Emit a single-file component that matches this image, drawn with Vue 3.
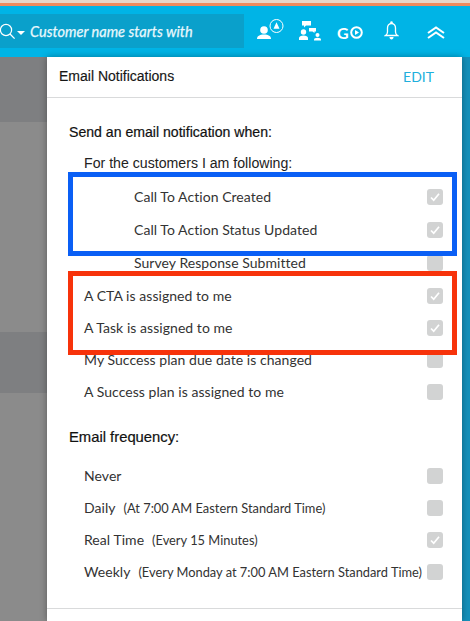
<script setup>
const notifyRows = [
  { label: 'Call To Action Created', checked: true, indent: true },
  { label: 'Call To Action Status Updated', checked: true, indent: true },
  { label: 'Survey Response Submitted', checked: false, indent: true },
  { label: 'A CTA is assigned to me', checked: true },
  { label: 'A Task is assigned to me', checked: true },
  { label: 'My Success plan due date is changed', checked: false },
  { label: 'A Success plan is assigned to me', checked: false }
]
const frequencyRows = [
  { label: 'Never', detail: '', checked: false },
  { label: 'Daily', detail: '(At 7:00 AM Eastern Standard Time)', checked: false },
  { label: 'Real Time', detail: '(Every 15 Minutes)', checked: true },
  { label: 'Weekly', detail: '(Every Monday at 7:00 AM Eastern Standard Time)', checked: false }
]
</script>

<template>
  <div class="screen">
    <div class="strip-light"></div>
    <div class="strip-orange"></div>
    <header class="topbar">
      <div class="search">
        <svg class="search-icon" width="18" height="18" viewBox="0 0 18 18">
          <circle cx="6" cy="7" r="5.6" fill="none" stroke="#fff" stroke-width="1.2" />
          <path d="M10 11l4.6 4.6" stroke="#fff" stroke-width="1.3" fill="none" />
        </svg>
        <svg class="caret" width="8" height="4" viewBox="0 0 8 4"><path d="M0 0h8L4 4z" fill="#fff" /></svg>
        <span class="placeholder">Customer name starts with</span>
      </div>
      <svg class="ic-person" width="28" height="22" viewBox="0 0 28 22">
        <circle cx="7" cy="11" r="3.8" fill="#fff" />
        <path d="M0 20c0-3 2.500-4.600 7-4.600s7 1.600 7 4.600z" fill="#fff" />
        <circle cx="19.500" cy="7" r="6.500" fill="none" stroke="#fff" stroke-width="1" />
        <path d="M19.500 3.200l3 6.500h-6z" fill="#fff" />
      </svg>
      <svg class="ic-org" width="23" height="20" viewBox="0 0 23 20">
        <path d="M3 0h9v4.600H7L5 6.500V4.600H3z" fill="#fff" />
        <path d="M10 7h7v3.500h-1.500V12L13.500 10.500H10z" fill="#fff" />
        <circle cx="4.500" cy="11" r="2.700" fill="#fff" />
        <path d="M0 19v-2c0-1.500 2-2.600 4.500-2.600S9 15.500 9 17v2z" fill="#fff" />
        <circle cx="18.500" cy="14" r="2" fill="#fff" />
        <path d="M15 19.500v-1c0-1 1.500-1.700 3.500-1.700s3.500.7 3.500 1.700v1z" fill="#fff" />
      </svg>
      <div class="go">
        <span class="go-g">G</span>
        <svg width="13" height="13" viewBox="0 0 13 13">
          <circle cx="6.500" cy="6.500" r="5.300" fill="none" stroke="#fff" stroke-width="2" />
          <path d="M5 4l4 2.500L5 9z" fill="#fff" />
        </svg>
      </div>
      <svg class="ic-bell" width="15" height="19" viewBox="0 0 15 19">
        <path d="M7.500 2.500c-2.800 0-4 2-4 4.500v4c0 1.600-.8 2.700-2 3.500h12c-1.200-.8-2-1.900-2-3.500V7c0-2.500-1.200-4.500-4-4.500z" fill="none" stroke="#fff" stroke-width="1.300" />
        <circle cx="7.500" cy="1.500" r="1.300" fill="#fff" />
        <path d="M5.500 16h4c0 1.500-.8 2.400-2 2.400s-2-.9-2-2.400z" fill="#fff" />
      </svg>
      <svg class="ic-chevrons" width="18" height="13" viewBox="0 0 18 13">
        <path d="M1 7l8-5.500L17 7M1 12l8-5.500L17 12" fill="none" stroke="#fff" stroke-width="2.100" />
      </svg>
    </header>

    <div class="content">
      <div class="backdrop">
        <div class="band dark band-a"></div>
        <div class="band light band-b"></div>
        <div class="band dark band-c"></div>
        <div class="band light band-d"></div>
      </div>

      <section class="panel">
        <div class="panel-head">
          <span class="panel-title">Email Notifications</span>
          <span class="edit">EDIT</span>
        </div>
        <div class="panel-body">
          <h3 class="heading first">Send an email notification when:</h3>
          <p class="subheading">For the customers I am following:</p>
          <div class="rows">
            <div v-for="row in notifyRows" :key="row.label" class="row" :class="{ indent: row.indent }">
              <span class="label">{{ row.label }}</span>
              <span class="box">
                <svg v-if="row.checked" width="16" height="16" viewBox="0 0 16 16">
                  <path d="M4 8.500l2.700 2.700L12 4.800" fill="none" stroke="#fff" stroke-width="1.700" />
                </svg>
              </span>
            </div>
          </div>
          <h3 class="heading second">Email frequency:</h3>
          <div class="rows freq">
            <div v-for="row in frequencyRows" :key="row.label" class="row">
              <span class="label">{{ row.label }}<span v-if="row.detail" class="detail">{{ row.detail }}</span></span>
              <span class="box">
                <svg v-if="row.checked" width="16" height="16" viewBox="0 0 16 16">
                  <path d="M4 8.500l2.700 2.700L12 4.800" fill="none" stroke="#fff" stroke-width="1.700" />
                </svg>
              </span>
            </div>
          </div>
        </div>
        <div class="panel-foot"></div>
      </section>

      <div class="side"></div>
    </div>

    <div class="mark mark-blue"></div>
    <div class="mark mark-red"></div>
  </div>
</template>

<style scoped>
.screen {
  position: relative;
  width: 470px;
  height: 621px;
  overflow: hidden;
  display: flex;
  flex-direction: column;
  background: #fff;
  font-family: "Lato", "Liberation Sans", sans-serif;
}
.strip-light { height: 3px; background: #e6d6c8; }
.strip-orange { height: 3px; background: #ef8b5c; }
.topbar {
  height: 51px;
  flex: none;
  display: flex;
  align-items: center;
  background: #00b4e6;
  position: relative;
  color: #fff;
}
.search {
  width: 244px;
  height: 34px;
  margin-top: -1px;
  background: #0aa0cb;
  display: flex;
  align-items: center;
  flex: none;
  position: relative;
}
.search-icon { flex: none; margin-left: 0; margin-top: 1px; }
.caret { flex: none; margin-left: -1px; margin-top: 3px; }
.placeholder {
  margin-left: 5px;
  font: italic 400 14.550px "Lato", "Liberation Sans", sans-serif;
  -webkit-text-stroke: 0.25px #e9f8fd;
  color: #e9f8fd;
  white-space: nowrap;
}
.ic-person { flex: none; margin-left: 13px; margin-top: -3px; }
.ic-org { flex: none; margin-left: 14px; margin-top: -2px; }
.go { flex: none; display: flex; align-items: center; margin-left: 15px; margin-top: 2px; gap: 1px; }
.go-g { font: 700 16px "Lato", "Liberation Sans", sans-serif; line-height: 16px; color: #fff; }
.ic-bell { flex: none; margin-left: 21px; margin-top: -2px; }
.ic-chevrons { flex: none; margin-left: 28px; margin-top: 1px; }

.content { flex: 1; display: flex; min-height: 0; }
.backdrop { width: 47px; flex: none; display: flex; flex-direction: column; }
.band.dark { background: #7e7f81; }
.band.light { background: #8b8b8b; }
.band-a { height: 65px; }
.band-b { height: 210px; }
.band-c { height: 61px; }
.band-d { flex: 1; }

.panel {
  width: 415px;
  flex: none;
  background: #fff;
  position: relative;
  z-index: 1;
  box-shadow: 0 0 7px rgba(0, 0, 0, 0.35);
}
.panel-head {
  display: flex;
  align-items: center;
  justify-content: space-between;
  padding: 0 28px 2px 12px;
  height: 38px;
  border-bottom: 1px solid #d9dadb;
}
.panel-title { font: 14px "Liberation Sans", sans-serif; color: #161616; -webkit-text-stroke: 0.15px #161616; }
.edit { font-size: 14px; color: #21afdc; }
.panel-body { padding: 0 19px 0 22px; }
.heading {
  margin: 0;
  font: 14.100px/20px "Liberation Sans", sans-serif;
  color: #111;
  -webkit-text-stroke: 0.2px #111;
}
.heading.first { padding-top: 24px; }
.heading.second { padding-top: 19px; font-size: 14.800px; }
.subheading {
  margin: 11px 0 8px 15px;
  font: 14.150px/20px "Liberation Sans", sans-serif;
  color: #222;
}
.rows { display: flex; flex-direction: column; }
.rows.freq { margin-top: 13px; }
.row {
  height: 32px;
  display: flex;
  align-items: center;
  justify-content: space-between;
  padding-left: 15px;
}
.row.indent { height: 33px; padding-left: 65px; }
.row.indent .box { margin-top: -1px; }
.row.indent .label { margin-top: -2px; }
.label { font-size: 14px; line-height: 16px; color: #333; white-space: nowrap; letter-spacing: 0.05px; }
.detail { font-size: 12.850px; margin-left: 8px; letter-spacing: 0; }
.box {
  width: 16px;
  height: 16px;
  flex: none;
  border-radius: 3px;
  background: #d2d3d3;
}
.box svg { display: block; }
.panel-foot { margin-top: 20px; border-top: 1px solid #d9dadb; }

.side {
  flex: 1;
  background: #1590ba;
}
.mark {
  position: absolute;
  left: 68px;
  width: 389px;
  box-sizing: border-box;
  border: 5px solid;
  z-index: 2;
  pointer-events: none;
}
.mark-blue { top: 172px; height: 84px; border-color: #0a5ff5; }
.mark-red { top: 271px; height: 84px; border-color: #f7330b; }
</style>
